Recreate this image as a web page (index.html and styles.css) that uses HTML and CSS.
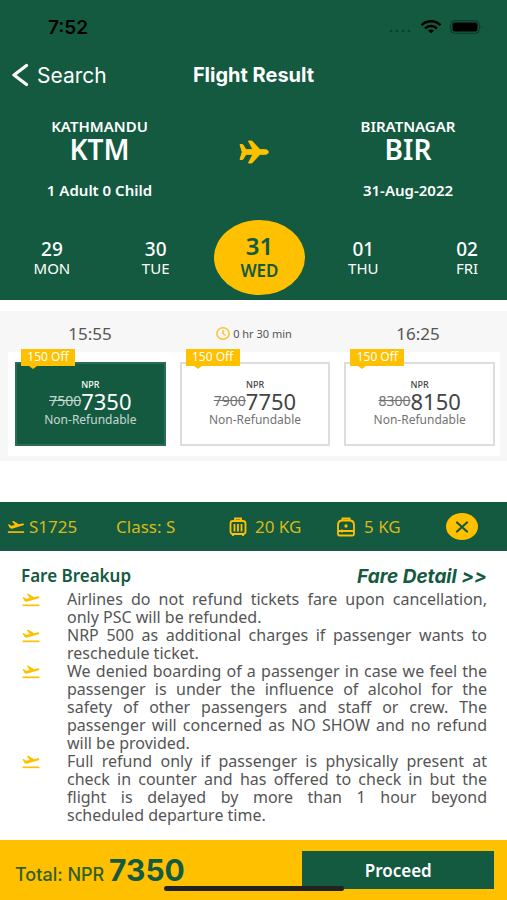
FILE: index.html
```html
<!DOCTYPE html>
<html lang="en">
<head>
<meta charset="utf-8">
<meta name="viewport" content="width=device-width, initial-scale=1">
<title>Flight Result</title>
<link rel="stylesheet" href="styles.css">
</head>
<body>
<svg class="sprite" aria-hidden="true">
  <symbol id="takeoff" viewBox="0 0 20 16">
    <path d="M1 14.200H19" stroke="currentColor" stroke-width="1.800" fill="none"/>
    <path d="M1 5.800L2.300 5.400l2.400 1.800 4-.8L5.500 2.200 7.300 1.800l5.900 3.700L17.200 4.600c1.800-.4 2.500 1.400.9 2L5.500 10.500 3.300 9.900Z" fill="currentColor"/>
  </symbol>
</svg>
<div class="app">
  <header class="top">
    <div class="status">
      <span class="clock">7:52</span>
      <div class="signals">
        <svg class="dots" width="24" height="6" viewBox="0 0 24 6" fill="#0c3f2e"><circle cx="3" cy="3" r="1.300"/><circle cx="9" cy="3" r="1.300"/><circle cx="15" cy="3" r="1.300"/><circle cx="21" cy="3" r="1.300"/></svg>
        <svg width="22" height="14" viewBox="0 0 22 14" fill="none" stroke="#000" stroke-width="2.500"><path d="M1.500 5.200C7-.2 15-.2 20.500 5.200"/><path d="M5 8.500c3.500-3.300 8.500-3.300 12 0"/><path d="M8 10.500c2-1.400 4-1.400 6 0l-3 3Z" fill="#000" stroke="none"/></svg>
        <svg width="33" height="14" viewBox="0 0 33 14"><rect x=".7" y=".7" width="28.600" height="12.600" rx="4" fill="none" stroke="#0a3727"/><rect x="2.500" y="2.500" width="25" height="9" rx="2" fill="#000"/><path d="M31 5v4q1.500-2 0-4Z" fill="#0a3727"/></svg>
      </div>
    </div>
    <nav class="nav">
      <a class="back" href="#search"><svg width="18" height="24" viewBox="0 0 18 24" fill="none" stroke="#fff" stroke-width="3.200" stroke-linecap="round" stroke-linejoin="round"><path d="M14.500 2.500L2 12l12.500 9.500"/></svg>Search</a>
      <h1>Flight Result</h1>
    </nav>
    <section class="route">
      <div class="place"><span class="city">KATHMANDU</span><strong>KTM</strong><span class="info">1 Adult 0 Child</span></div>
      <svg class="plane" width="30" height="24" viewBox="0 0 30 24" fill="#ffc000"><path d="M1 4.500h2.700L7 9.700h7L9.500 1h3.300l8.200 8.700h5.500c3.700 0 3.700 4.600 0 4.600H21L12.800 23H9.500L14 14.300H7l-3.300 5.200H1L3.300 12Z" stroke="#ffc000"/></svg>
      <div class="place"><span class="city">BIRATNAGAR</span><strong>BIR</strong><span class="info">31-Aug-2022</span></div>
    </section>
    <div class="dates">
      <button type="button"><b>29</b><span>MON</span></button>
      <button type="button"><b>30</b><span>TUE</span></button>
      <button type="button" class="active" aria-current="date"><b>31</b><span>WED</span></button>
      <button type="button"><b>01</b><span>THU</span></button>
      <button type="button"><b>02</b><span>FRI</span></button>
    </div>
  </header>

  <main>
    <section class="result">
      <div class="times">
        <span class="time">15:55</span>
        <span class="duration"><svg width="14" height="13" viewBox="0 0 14 13" fill="none" stroke="#ffc12e" stroke-width="1.500"><ellipse cx="7" cy="6.500" rx="6.200" ry="5.700"/><path d="M7 3v3.500l2.500 2"/></svg>0 hr 30 min</span>
        <span class="time">16:25</span>
      </div>
      <div class="fares">
        <button type="button" class="fare chosen"><span class="badge">150 Off</span><span class="currency">NPR</span><span class="price"><s>7500</s>7350</span><span class="terms">Non-Refundable</span></button>
        <button type="button" class="fare"><span class="badge">150 Off</span><span class="currency">NPR</span><span class="price"><s>7900</s>7750</span><span class="terms">Non-Refundable</span></button>
        <button type="button" class="fare"><span class="badge">150 Off</span><span class="currency">NPR</span><span class="price"><s>8300</s>8150</span><span class="terms">Non-Refundable</span></button>
      </div>
    </section>

    <section class="flight">
      <span class="item number"><svg width="18" height="15"><use href="#takeoff"/></svg>S1725</span>
      <span class="item">Class: S</span>
      <span class="item bag"><svg width="18" height="20" viewBox="0 0 18 20" fill="none" stroke="currentColor" stroke-width="1.800"><path d="M6 4V1.500h6V4"/><rect x="1.500" y="4" width="15" height="13" rx="2.500"/><path d="M5.500 7v7.500M9 7v7.500M12.500 7v7.500M4 17v2M14 17v2"/></svg>20 KG</span>
      <span class="item bag"><svg width="20" height="20" viewBox="0 0 20 20" fill="none" stroke="currentColor" stroke-width="1.800"><path d="M6.500 3.500V1.500h7v2"/><path d="M2 8q0-4.500 4.500-4.500h7Q18 3.500 18 8v9q0 1.500-1.500 1.500h-13Q2 18.500 2 17ZM2 14h16M6 12.500v3"/><circle cx="10" cy="9" r="1.700" fill="currentColor" stroke="none"/></svg>5 KG</span>
      <button type="button" class="close" aria-label="Close"><svg width="14" height="12" viewBox="0 0 14 12" stroke="#135a40" stroke-width="2.200" stroke-linecap="round"><path d="M2 1.500l10 9M12 1.500l-10 9"/></svg></button>
    </section>

    <section class="details">
      <div class="heading"><h2>Fare Breakup</h2><a href="#fare-detail">Fare Detail &gt;&gt;</a></div>
      <ul>
        <li><svg width="20" height="15"><use href="#takeoff"/></svg><p>Airlines do not refund tickets fare upon cancellation, only PSC will be refunded.</p></li>
        <li><svg width="20" height="15"><use href="#takeoff"/></svg><p>NRP 500 as additional charges if passenger wants to reschedule ticket.</p></li>
        <li><svg width="20" height="15"><use href="#takeoff"/></svg><p>We denied boarding of a passenger in case we feel the passenger is under the influence of alcohol for the safety of other passengers and staff or crew. The passenger will concerned as NO SHOW and no refund will be provided.</p></li>
        <li><svg width="20" height="15"><use href="#takeoff"/></svg><p>Full refund only if passenger is physically present at check in counter and has offered to check in but the flight is delayed by more than 1 hour beyond scheduled&nbsp;departure time.</p></li>
      </ul>
    </section>
  </main>

  <footer class="checkout">
    <div class="total">Total: NPR <strong>7350</strong></div>
    <button type="button" class="proceed">Proceed</button>
    <span class="home"></span>
  </footer>
</div>
</body>
</html>
```

FILE: styles.css
```css
* { box-sizing: border-box; }
body {
  margin: 0;
  background: #fff;
  color: #555;
  font-family: "Noto Sans", "Open Sans", sans-serif;
}
button { font: inherit; color: inherit; border: 0; padding: 0; background: none; }
h1, h2, p, ul { margin: 0; padding: 0; }
svg { flex: none; }
.sprite { position: absolute; width: 0; height: 0; }
.app { min-height: 100vh; display: flex; flex-direction: column; }

.top { background: #135a40; color: #fff; padding-bottom: 5px; overflow: hidden; }
.status {
  height: 54px;
  padding: 0 24px 0 48px;
  display: flex;
  align-items: center;
  justify-content: space-between;
  color: #000;
}
.clock { font: 600 19px Inter, sans-serif; }
.signals { display: flex; align-items: center; gap: 8px; }
.dots { align-self: flex-end; }
.nav {
  height: 42px;
  padding: 0 12px;
  display: grid;
  grid-template-columns: 1fr auto 1fr;
  align-items: center;
  font-family: Inter, sans-serif;
}
.back { display: flex; align-items: center; gap: 7px; color: #fff; text-decoration: none; font-size: 21px; }
.nav h1 { font-size: 20px; font-weight: 700; }

.route { display: grid; grid-template-columns: 239px 30px 1fr; padding: 20px 0 0; }
.place { display: flex; flex-direction: column; align-items: center; font-weight: 600; }
.place:first-child { padding-right: 40px; }
.place:last-child { padding-left: 40px; }
.city { font-size: 15px; line-height: 20px; }
.place strong { font-size: 28px; line-height: 26px; font-weight: 600; }
.info { font-size: 15px; line-height: 20px; margin-top: 18px; }
.plane { margin-top: 24px; }

.dates {
  display: grid;
  grid-template-columns: repeat(5, 1fr);
  margin-right: -12px;
  padding-top: 20px;
}
.dates button {
  height: 75px;
  display: flex;
  flex-direction: column;
  align-items: center;
  justify-content: center;
}
.dates b { font-size: 19px; line-height: 20px; font-weight: 500; }
.dates span { font-size: 15px; line-height: 18px; }
.dates .active {
  width: 91px;
  justify-self: center;
  background: #ffc000;
  color: #135a40;
  border-radius: 50%;
  font-weight: 600;
}
.dates .active b { font-size: 24px; line-height: 26px; font-weight: 600; }
.dates .active span { font-size: 17px; line-height: 24px; }

.result { margin: 11px 0 41px; padding: 0 7px 5px 8px; background: #f7f7f7; }
.times {
  height: 41px;
  display: grid;
  grid-template-columns: repeat(3, 1fr);
  align-items: center;
  justify-items: center;
  padding-top: 3px;
}
.time { font-size: 17px; }
.duration { display: flex; align-items: center; gap: 3px; font-size: 11px; }
.fares {
  display: grid;
  grid-template-columns: repeat(3, 1fr);
  gap: 14px;
  padding: 10px 5px 10px 7px;
  background: #fff;
}
.fare {
  position: relative;
  height: 84px;
  border: 2px solid #ddd;
  display: flex;
  flex-direction: column;
  align-items: center;
  justify-content: center;
  color: #444;
}
.fare.chosen { background: #135a40; border-color: #2c6c54; color: #fff; }
.badge {
  position: absolute;
  top: -15px;
  left: 4px;
  width: 54px;
  height: 17px;
  background: #ffc000;
  color: #fff;
  font-size: 12px;
  line-height: 16px;
}
.badge::after {
  content: "";
  position: absolute;
  left: 8px;
  top: 17px;
  border: 4px solid transparent;
  border-top: 3px solid #ffc000;
  border-bottom: 0;
}
.currency { font-size: 9px; line-height: 12px; font-weight: 500; }
.price { display: flex; align-items: center; font-size: 22px; line-height: 20px; }
.price s { font-size: 14px; opacity: .75; }
.terms { font-size: 12px; line-height: 18px; opacity: .75; }

.flight {
  height: 49px;
  background: #135a40;
  color: #d9b916;
  display: grid;
  grid-template-columns: 109px 113px 107px 110px 1fr;
  align-items: center;
  padding: 0 29px 0 7px;
  font-size: 17px;
}
.item { display: flex; align-items: center; gap: 4px; }
.number svg, .bag svg, li svg { color: #ffc000; }
.bag { gap: 8px; }
.close {
  justify-self: end;
  width: 32px;
  height: 27px;
  border-radius: 50%;
  background: #ffc000;
  display: grid;
  place-items: center;
}

.details { padding: 11px 20px 12px 21px; }
.heading { display: flex; justify-content: space-between; align-items: center; height: 28px; color: #135a40; }
.heading h2 { font-size: 17px; line-height: 24px; font-weight: 600; }
.heading a { color: inherit; font: italic 700 19px Inter, sans-serif; text-decoration: none; }
li { display: grid; grid-template-columns: 20px 1fr; column-gap: 26px; }
li svg { margin-top: 2px; }
li p { font-size: 16px; line-height: 18px; text-align: justify; }

.checkout {
  position: relative;
  margin-top: auto;
  height: 60px;
  display: flex;
  align-items: center;
  justify-content: space-between;
  padding: 0 13px 0 15px;
  background: #ffc000;
  color: #2f5f24;
}
.total { font: 500 18px Inter, sans-serif; }
.total strong { font-size: 30px; font-weight: 700; color: #135a40; }
.proceed { width: 40%; height: 38px; background: #135a40; color: #fff; font-size: 17px; font-weight: 600; }
.home {
  position: absolute;
  bottom: 9px;
  left: 50%;
  transform: translateX(-50%);
  width: 180px;
  height: 5px;
  border-radius: 3px;
  background: #222;
}
```
